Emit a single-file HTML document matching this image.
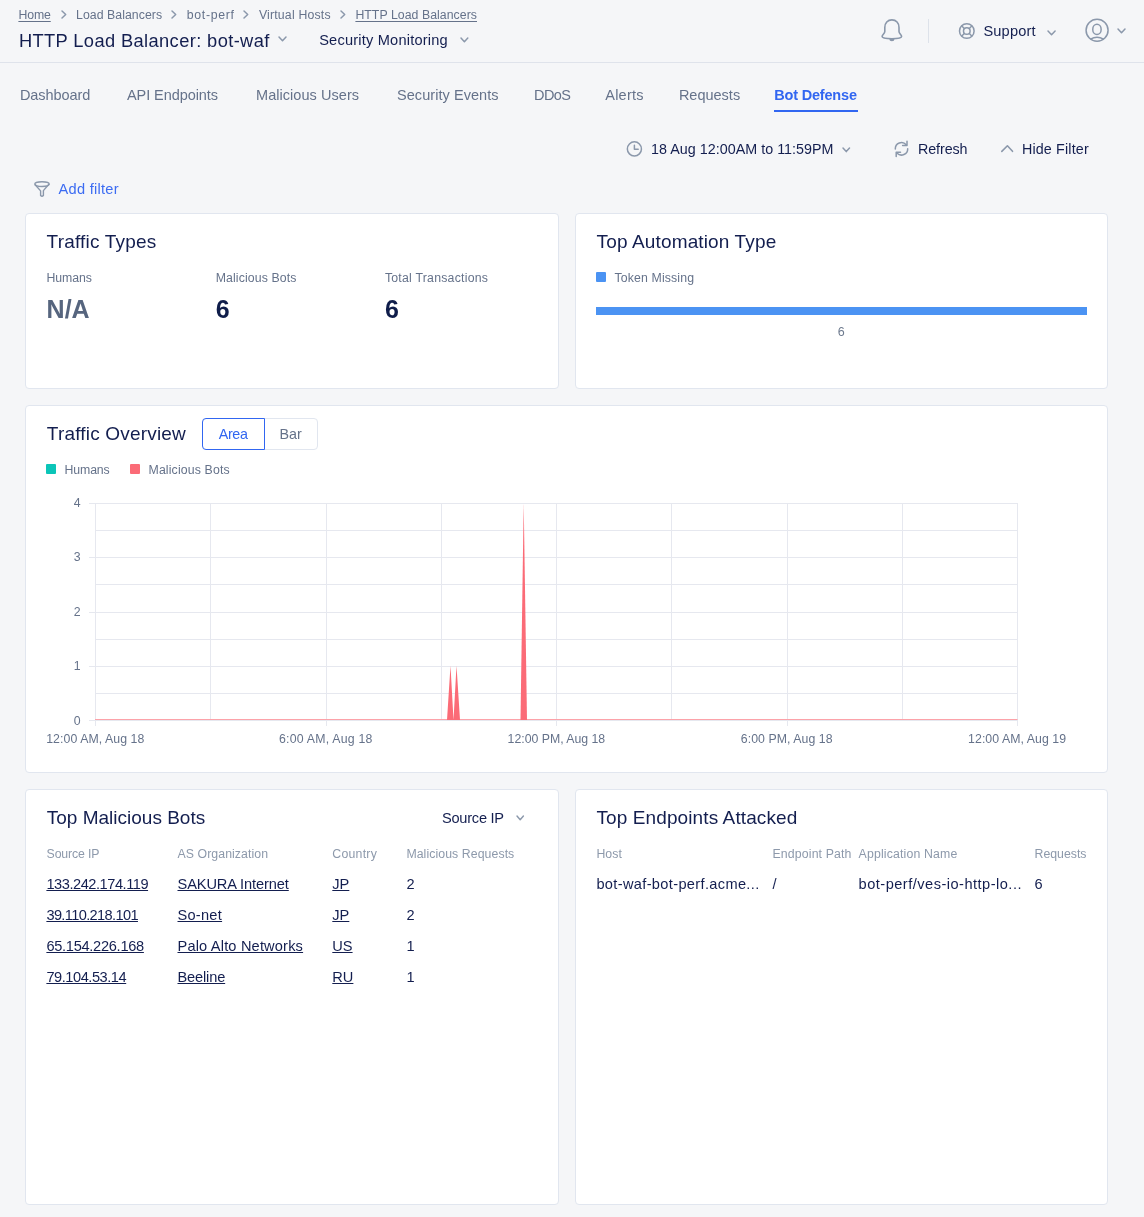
<!DOCTYPE html>
<html><head><meta charset="utf-8"><style>
html,body{margin:0;padding:0;}
body{width:1144px;height:1217px;background:#f5f6f8;position:relative;overflow:hidden;font-family:"Liberation Sans",sans-serif;}
.t{position:absolute;white-space:nowrap;line-height:1;}
#tx{position:absolute;left:0;top:0;width:1144px;height:1217px;will-change:transform;}
.abs{position:absolute;}
.card{position:absolute;box-sizing:border-box;background:#fff;border:1px solid #e1e6ef;border-radius:4px;}
</style></head><body>
<div class="abs" style="left:0;top:62px;width:1144px;height:1px;background:#dfe3eb"></div>
<div class="abs" style="left:774px;top:110px;width:84px;height:2px;background:#3166f1"></div>
<div class="card" style="left:25px;top:213px;width:534px;height:176px"></div>
<div class="card" style="left:575px;top:213px;width:533px;height:176px"></div>
<div class="card" style="left:25px;top:405px;width:1083px;height:368px"></div>
<div class="card" style="left:25px;top:789px;width:534px;height:416px"></div>
<div class="card" style="left:575px;top:789px;width:533px;height:416px"></div>
<div class="abs" style="left:596px;top:272px;width:10px;height:10px;background:#4b93f3;border-radius:1px"></div>
<div class="abs" style="left:596px;top:307px;width:491px;height:8px;background:#4b93f3"></div>
<div class="abs" style="left:46px;top:464px;width:10px;height:10px;background:#0bc5b8;border-radius:1px"></div>
<div class="abs" style="left:130px;top:464px;width:10px;height:10px;background:#fb6b77;border-radius:1px"></div>
<div class="abs" style="box-sizing:border-box;left:202px;top:418px;width:116px;height:32px;border:1px solid #e1e6ef;border-radius:4px;background:#fff"></div>
<div class="abs" style="box-sizing:border-box;left:202px;top:418px;width:63px;height:32px;border:1px solid #3166f1;border-radius:4px 0 0 4px;background:#fff"></div>
<svg class="abs" width="1144" height="1217" style="left:0;top:0"><line x1="89" y1="503.5" x2="1017.5" y2="503.5" stroke="#e6e8ef" stroke-width="1"/><line x1="95.5" y1="530.5" x2="1017.5" y2="530.5" stroke="#e6e8ef" stroke-width="1"/><line x1="89" y1="557.5" x2="1017.5" y2="557.5" stroke="#e6e8ef" stroke-width="1"/><line x1="95.5" y1="584.5" x2="1017.5" y2="584.5" stroke="#e6e8ef" stroke-width="1"/><line x1="89" y1="612.5" x2="1017.5" y2="612.5" stroke="#e6e8ef" stroke-width="1"/><line x1="95.5" y1="639.5" x2="1017.5" y2="639.5" stroke="#e6e8ef" stroke-width="1"/><line x1="89" y1="666.5" x2="1017.5" y2="666.5" stroke="#e6e8ef" stroke-width="1"/><line x1="95.5" y1="693.5" x2="1017.5" y2="693.5" stroke="#e6e8ef" stroke-width="1"/><line x1="89" y1="720.5" x2="1017.5" y2="720.5" stroke="#e6e8ef" stroke-width="1"/><line x1="95.5" y1="503" x2="95.5" y2="726" stroke="#e6e8ef" stroke-width="1"/><line x1="210.5" y1="503" x2="210.5" y2="720" stroke="#e6e8ef" stroke-width="1"/><line x1="326.5" y1="503" x2="326.5" y2="726" stroke="#e6e8ef" stroke-width="1"/><line x1="441.5" y1="503" x2="441.5" y2="720" stroke="#e6e8ef" stroke-width="1"/><line x1="556.5" y1="503" x2="556.5" y2="726" stroke="#e6e8ef" stroke-width="1"/><line x1="671.5" y1="503" x2="671.5" y2="720" stroke="#e6e8ef" stroke-width="1"/><line x1="787.5" y1="503" x2="787.5" y2="726" stroke="#e6e8ef" stroke-width="1"/><line x1="902.5" y1="503" x2="902.5" y2="720" stroke="#e6e8ef" stroke-width="1"/><line x1="1017.5" y1="503" x2="1017.5" y2="726" stroke="#e6e8ef" stroke-width="1"/><line x1="95" y1="719.5" x2="1017.5" y2="719.5" stroke="#fca2a9" stroke-width="1.2"/><path d="M447 720 L450.5 665.75 L453.5 720 L456.5 665.75 L460 720 Z" fill="#fb6b77"/><path d="M520.5 720 L523.7 503 L527 720 Z" fill="#fb6b77"/></svg>
<svg class="abs" style="left:59.7px;top:9px" width="7.7" height="11"><path d="M2 2 L5.7 5.5 L2 9" fill="none" stroke="#8b98ab" stroke-width="1.5" stroke-linecap="round" stroke-linejoin="round"/></svg><svg class="abs" style="left:170.4px;top:9px" width="7.7" height="11"><path d="M2 2 L5.7 5.5 L2 9" fill="none" stroke="#8b98ab" stroke-width="1.5" stroke-linecap="round" stroke-linejoin="round"/></svg><svg class="abs" style="left:242px;top:9px" width="7.7" height="11"><path d="M2 2 L5.7 5.5 L2 9" fill="none" stroke="#8b98ab" stroke-width="1.5" stroke-linecap="round" stroke-linejoin="round"/></svg><svg class="abs" style="left:339.1px;top:9px" width="7.7" height="11"><path d="M2 2 L5.7 5.5 L2 9" fill="none" stroke="#8b98ab" stroke-width="1.5" stroke-linecap="round" stroke-linejoin="round"/></svg><svg class="abs" style="left:276.5px;top:35.4px" width="11" height="7.7"><path d="M2 2 L5.5 5.7 L9 2" fill="none" stroke="#8b98ab" stroke-width="1.5" stroke-linecap="round" stroke-linejoin="round"/></svg><svg class="abs" style="left:458.8px;top:35.5px" width="10.8" height="7.7"><path d="M2 2 L5.4 5.7 L8.8 2" fill="none" stroke="#8b98ab" stroke-width="1.5" stroke-linecap="round" stroke-linejoin="round"/></svg><svg class="abs" style="left:1046.4px;top:28.5px" width="11.1" height="7.7"><path d="M2 2 L5.55 5.7 L9.1 2" fill="none" stroke="#8b98ab" stroke-width="1.5" stroke-linecap="round" stroke-linejoin="round"/></svg><svg class="abs" style="left:1115.5px;top:26.5px" width="11" height="7.7"><path d="M2 2 L5.5 5.7 L9 2" fill="none" stroke="#8b98ab" stroke-width="1.5" stroke-linecap="round" stroke-linejoin="round"/></svg><svg class="abs" style="left:841.3px;top:145.6px" width="10.5" height="7.6"><path d="M2 2 L5.25 5.6 L8.5 2" fill="none" stroke="#8b98ab" stroke-width="1.5" stroke-linecap="round" stroke-linejoin="round"/></svg><svg class="abs" style="left:515.2px;top:813.6px" width="10.4" height="7.8"><path d="M2 2 L5.2 5.8 L8.4 2" fill="none" stroke="#8b98ab" stroke-width="1.4" stroke-linecap="round" stroke-linejoin="round"/></svg><svg class="abs" style="left:999px;top:143px" width="16" height="11"><path d="M2.8 8.4 L8.4 2.8 L13.5 8.3" fill="none" stroke="#8b98ab" stroke-width="1.6" stroke-linecap="round" stroke-linejoin="round"/></svg><svg class="abs" style="left:878px;top:16px" width="28" height="30" viewBox="0 0 28 30"><path d="M13.9 3.9 C9.6 3.9 6.8 7.2 6.8 11.4 L6.8 15.4 C6.8 17.6 4.1 18.8 4.1 20.6 C4.1 22 8 22.8 13.9 22.8 C19.8 22.8 23.6 22 23.6 20.6 C23.6 18.8 21 17.6 21 15.4 L21 11.4 C21 7.2 18.2 3.9 13.9 3.9 Z" fill="none" stroke="#8b98ab" stroke-width="1.6"/><path d="M11.3 23 A2.6 2.3 0 0 0 16.5 23 Z" fill="#8b98ab"/></svg><div class="abs" style="left:928px;top:19px;width:1px;height:24px;background:#dde2ea"></div><svg class="abs" style="left:957px;top:21px" width="20" height="20" viewBox="0 0 20 20"><circle cx="9.8" cy="10" r="7.3" fill="none" stroke="#8b98ab" stroke-width="1.5"/><circle cx="9.8" cy="10" r="3.3" fill="none" stroke="#8b98ab" stroke-width="1.5"/><path d="M4.6 4.8 L7.5 7.7 M15 4.8 L12.1 7.7 M4.6 15.2 L7.5 12.3 M15 15.2 L12.1 12.3" stroke="#8b98ab" stroke-width="1.5"/></svg><svg class="abs" style="left:1083px;top:16px" width="28" height="28" viewBox="0 0 28 28"><circle cx="14.08" cy="14.27" r="11" fill="none" stroke="#8b98ab" stroke-width="1.5"/><ellipse cx="13.95" cy="13.4" rx="4.2" ry="5.1" fill="none" stroke="#8b98ab" stroke-width="1.5"/><path d="M7.5 23.1 Q13.95 19.5 20.6 23.1" fill="none" stroke="#8b98ab" stroke-width="1.5"/></svg><svg class="abs" style="left:625px;top:140px" width="18" height="18" viewBox="0 0 18 18"><circle cx="9.4" cy="8.9" r="7.05" fill="none" stroke="#8b98ab" stroke-width="1.5"/><path d="M9.4 5.2 L9.4 9.3 L13.2 9.3" fill="none" stroke="#8b98ab" stroke-width="1.5" stroke-linecap="round" stroke-linejoin="round"/></svg><svg class="abs" style="left:892px;top:139px" width="19" height="19" viewBox="0 0 19 19"><path d="M3.3 10 A6.2 6.2 0 0 1 14.2 5.8" fill="none" stroke="#8b98ab" stroke-width="1.5" stroke-linecap="round"/><path d="M15 2.3 L15 6.4 L10.6 6.4" fill="none" stroke="#8b98ab" stroke-width="1.5" stroke-linecap="round" stroke-linejoin="round"/><path d="M15.7 9.7 A6.2 6.2 0 0 1 5.1 14.2" fill="none" stroke="#8b98ab" stroke-width="1.5" stroke-linecap="round"/><path d="M4.2 17.6 L4.2 13.3 L8.5 13.3" fill="none" stroke="#8b98ab" stroke-width="1.5" stroke-linecap="round" stroke-linejoin="round"/></svg><svg class="abs" style="left:32px;top:179px" width="20" height="20" viewBox="0 0 20 20"><ellipse cx="10" cy="5.1" rx="7.2" ry="2.4" fill="none" stroke="#8b98ab" stroke-width="1.4"/><path d="M2.9 5.5 L8.6 11.9 L8.6 16.6 Q10 18 11.4 16.6 L11.4 11.6 L17.1 5" fill="none" stroke="#8b98ab" stroke-width="1.4" stroke-linejoin="round"/></svg>
<div id="tx"><div class="t" style="left:18.40px;top:9.00px;font-size:12.3px;color:#65728a;letter-spacing:-0.114px;text-decoration:underline;text-underline-offset:2px;text-decoration-thickness:1px;">Home</div>
<div class="t" style="left:76.10px;top:9.00px;font-size:12.3px;color:#65728a;letter-spacing:0.040px;">Load Balancers</div>
<div class="t" style="left:186.80px;top:9.00px;font-size:12.3px;color:#65728a;letter-spacing:0.681px;">bot-perf</div>
<div class="t" style="left:258.90px;top:9.00px;font-size:12.3px;color:#65728a;letter-spacing:0.184px;">Virtual Hosts</div>
<div class="t" style="left:355.40px;top:9.00px;font-size:12.3px;color:#65728a;letter-spacing:0.045px;text-decoration:underline;text-underline-offset:2px;text-decoration-thickness:1px;">HTTP Load Balancers</div>
<div class="t" style="left:18.90px;top:32.00px;font-size:18.3px;color:#131e4f;letter-spacing:0.383px;">HTTP Load Balancer: bot-waf</div>
<div class="t" style="left:319.20px;top:33.00px;font-size:14.6px;color:#131e4f;letter-spacing:0.196px;">Security Monitoring</div>
<div class="t" style="left:983.40px;top:24.00px;font-size:14.6px;color:#131e4f;letter-spacing:0.188px;">Support</div>
<div class="t" style="left:19.90px;top:88.00px;font-size:14.5px;color:#65728a;letter-spacing:-0.051px;">Dashboard</div>
<div class="t" style="left:127.00px;top:88.00px;font-size:14.5px;color:#65728a;letter-spacing:-0.077px;">API Endpoints</div>
<div class="t" style="left:256.00px;top:88.00px;font-size:14.5px;color:#65728a;letter-spacing:0.050px;">Malicious Users</div>
<div class="t" style="left:397.00px;top:88.00px;font-size:14.5px;color:#65728a;letter-spacing:0.057px;">Security Events</div>
<div class="t" style="left:534.00px;top:88.00px;font-size:14.5px;color:#65728a;letter-spacing:-0.572px;">DDoS</div>
<div class="t" style="left:605.30px;top:88.00px;font-size:14.5px;color:#65728a;letter-spacing:0.211px;">Alerts</div>
<div class="t" style="left:678.90px;top:88.00px;font-size:14.5px;color:#65728a;">Requests</div>
<div class="t" style="left:774.20px;top:88.00px;font-size:14.5px;color:#3166f1;letter-spacing:-0.181px;font-weight:bold;">Bot Defense</div>
<div class="t" style="left:651.00px;top:142.00px;font-size:14.3px;color:#131e4f;letter-spacing:0.032px;">18 Aug 12:00AM to 11:59PM</div>
<div class="t" style="left:918.00px;top:142.00px;font-size:14.3px;color:#131e4f;letter-spacing:-0.092px;">Refresh</div>
<div class="t" style="left:1021.90px;top:142.00px;font-size:14.3px;color:#131e4f;letter-spacing:0.166px;">Hide Filter</div>
<div class="t" style="left:58.60px;top:182.00px;font-size:14.6px;color:#3c6cf2;letter-spacing:0.267px;">Add filter</div>
<div class="t" style="left:46.60px;top:232.00px;font-size:19.0px;color:#131e4f;letter-spacing:0.196px;">Traffic Types</div>
<div class="t" style="left:46.60px;top:272.00px;font-size:12.3px;color:#65728a;letter-spacing:-0.103px;">Humans</div>
<div class="t" style="left:215.70px;top:272.00px;font-size:12.3px;color:#65728a;letter-spacing:0.117px;">Malicious Bots</div>
<div class="t" style="left:384.90px;top:272.00px;font-size:12.3px;color:#65728a;letter-spacing:0.233px;">Total Transactions</div>
<div class="t" style="left:46.60px;top:297.00px;font-size:25px;color:#56657e;font-weight:bold;">N/A</div>
<div class="t" style="left:215.70px;top:297.00px;font-size:25px;color:#0f1d4a;font-weight:bold;">6</div>
<div class="t" style="left:384.90px;top:297.00px;font-size:25px;color:#0f1d4a;font-weight:bold;">6</div>
<div class="t" style="left:596.60px;top:232.00px;font-size:19.0px;color:#131e4f;letter-spacing:0.140px;">Top Automation Type</div>
<div class="t" style="left:614.50px;top:272.00px;font-size:12.3px;color:#65728a;letter-spacing:0.132px;">Token Missing</div>
<div class="t" style="left:837.80px;top:326.00px;font-size:12.5px;color:#6d7a8e;">6</div>
<div class="t" style="left:46.80px;top:424.00px;font-size:19.0px;color:#131e4f;letter-spacing:0.185px;">Traffic Overview</div>
<div class="t" style="left:218.70px;top:427.00px;font-size:14.3px;color:#3166f1;letter-spacing:-0.348px;">Area</div>
<div class="t" style="left:279.50px;top:427.00px;font-size:14.3px;color:#65728a;">Bar</div>
<div class="t" style="left:64.60px;top:464.00px;font-size:12.3px;color:#65728a;letter-spacing:-0.143px;">Humans</div>
<div class="t" style="left:148.50px;top:464.00px;font-size:12.3px;color:#65728a;letter-spacing:0.140px;">Malicious Bots</div>
<div class="t" style="left:73.80px;top:497.00px;font-size:12.3px;color:#65728a;">4</div>
<div class="t" style="left:73.80px;top:551.00px;font-size:12.3px;color:#65728a;">3</div>
<div class="t" style="left:73.80px;top:606.00px;font-size:12.3px;color:#65728a;">2</div>
<div class="t" style="left:73.80px;top:660.00px;font-size:12.3px;color:#65728a;">1</div>
<div class="t" style="left:73.80px;top:715.00px;font-size:12.3px;color:#65728a;">0</div>
<div class="t" style="left:46.20px;top:733.00px;font-size:12.3px;color:#65728a;letter-spacing:0.073px;">12:00 AM, Aug 18</div>
<div class="t" style="left:279.00px;top:733.00px;font-size:12.3px;color:#65728a;letter-spacing:0.223px;">6:00 AM, Aug 18</div>
<div class="t" style="left:507.60px;top:733.00px;font-size:12.3px;color:#65728a;letter-spacing:-0.012px;">12:00 PM, Aug 18</div>
<div class="t" style="left:740.80px;top:733.00px;font-size:12.3px;color:#65728a;letter-spacing:0.060px;">6:00 PM, Aug 18</div>
<div class="t" style="left:968.10px;top:733.00px;font-size:12.3px;color:#65728a;letter-spacing:0.059px;">12:00 AM, Aug 19</div>
<div class="t" style="left:46.80px;top:808.00px;font-size:19.0px;color:#131e4f;">Top Malicious Bots</div>
<div class="t" style="left:442.00px;top:811.00px;font-size:14.6px;color:#131e4f;letter-spacing:-0.249px;">Source IP</div>
<div class="t" style="left:46.60px;top:848.00px;font-size:12.3px;color:#8d99ab;letter-spacing:-0.137px;">Source IP</div>
<div class="t" style="left:177.50px;top:848.00px;font-size:12.3px;color:#8d99ab;letter-spacing:0.068px;">AS Organization</div>
<div class="t" style="left:332.30px;top:848.00px;font-size:12.3px;color:#8d99ab;letter-spacing:0.242px;">Country</div>
<div class="t" style="left:406.40px;top:848.00px;font-size:12.3px;color:#8d99ab;letter-spacing:0.074px;">Malicious Requests</div>
<div class="t" style="left:46.40px;top:877.00px;font-size:14.6px;color:#131e4f;letter-spacing:-0.454px;text-decoration:underline;text-underline-offset:1px;text-decoration-thickness:1px;">133.242.174.119</div>
<div class="t" style="left:177.50px;top:877.00px;font-size:14.6px;color:#131e4f;letter-spacing:-0.099px;text-decoration:underline;text-underline-offset:1px;text-decoration-thickness:1px;">SAKURA Internet</div>
<div class="t" style="left:332.30px;top:877.00px;font-size:14.6px;color:#131e4f;text-decoration:underline;text-underline-offset:1px;text-decoration-thickness:1px;">JP</div>
<div class="t" style="left:406.40px;top:877.00px;font-size:14.6px;color:#131e4f;">2</div>
<div class="t" style="left:46.40px;top:908.00px;font-size:14.6px;color:#131e4f;letter-spacing:-0.629px;text-decoration:underline;text-underline-offset:1px;text-decoration-thickness:1px;">39.110.218.101</div>
<div class="t" style="left:177.50px;top:908.00px;font-size:14.6px;color:#131e4f;letter-spacing:0.261px;text-decoration:underline;text-underline-offset:1px;text-decoration-thickness:1px;">So-net</div>
<div class="t" style="left:332.30px;top:908.00px;font-size:14.6px;color:#131e4f;text-decoration:underline;text-underline-offset:1px;text-decoration-thickness:1px;">JP</div>
<div class="t" style="left:406.40px;top:908.00px;font-size:14.6px;color:#131e4f;">2</div>
<div class="t" style="left:46.40px;top:939.00px;font-size:14.6px;color:#131e4f;letter-spacing:-0.282px;text-decoration:underline;text-underline-offset:1px;text-decoration-thickness:1px;">65.154.226.168</div>
<div class="t" style="left:177.50px;top:939.00px;font-size:14.6px;color:#131e4f;letter-spacing:0.173px;text-decoration:underline;text-underline-offset:1px;text-decoration-thickness:1px;">Palo Alto Networks</div>
<div class="t" style="left:332.30px;top:939.00px;font-size:14.6px;color:#131e4f;text-decoration:underline;text-underline-offset:1px;text-decoration-thickness:1px;">US</div>
<div class="t" style="left:406.40px;top:939.00px;font-size:14.6px;color:#131e4f;">1</div>
<div class="t" style="left:46.40px;top:970.00px;font-size:14.6px;color:#131e4f;letter-spacing:-0.451px;text-decoration:underline;text-underline-offset:1px;text-decoration-thickness:1px;">79.104.53.14</div>
<div class="t" style="left:177.50px;top:970.00px;font-size:14.6px;color:#131e4f;letter-spacing:-0.148px;text-decoration:underline;text-underline-offset:1px;text-decoration-thickness:1px;">Beeline</div>
<div class="t" style="left:332.30px;top:970.00px;font-size:14.6px;color:#131e4f;text-decoration:underline;text-underline-offset:1px;text-decoration-thickness:1px;">RU</div>
<div class="t" style="left:406.40px;top:970.00px;font-size:14.6px;color:#131e4f;">1</div>
<div class="t" style="left:596.40px;top:808.00px;font-size:19.0px;color:#131e4f;letter-spacing:0.112px;">Top Endpoints Attacked</div>
<div class="t" style="left:596.40px;top:848.00px;font-size:12.3px;color:#8d99ab;letter-spacing:0.041px;">Host</div>
<div class="t" style="left:772.50px;top:848.00px;font-size:12.3px;color:#8d99ab;letter-spacing:0.141px;">Endpoint Path</div>
<div class="t" style="left:858.60px;top:848.00px;font-size:12.3px;color:#8d99ab;letter-spacing:0.151px;">Application Name</div>
<div class="t" style="left:1034.50px;top:848.00px;font-size:12.3px;color:#8d99ab;">Requests</div>
<div class="t" style="left:596.40px;top:877.00px;font-size:14.6px;color:#131e4f;letter-spacing:0.344px;">bot-waf-bot-perf.acme...</div>
<div class="t" style="left:772.50px;top:877.00px;font-size:14.6px;color:#131e4f;">/</div>
<div class="t" style="left:858.60px;top:877.00px;font-size:14.6px;color:#131e4f;letter-spacing:0.481px;">bot-perf/ves-io-http-lo...</div>
<div class="t" style="left:1034.50px;top:877.00px;font-size:14.6px;color:#131e4f;">6</div></div>
</body></html>
